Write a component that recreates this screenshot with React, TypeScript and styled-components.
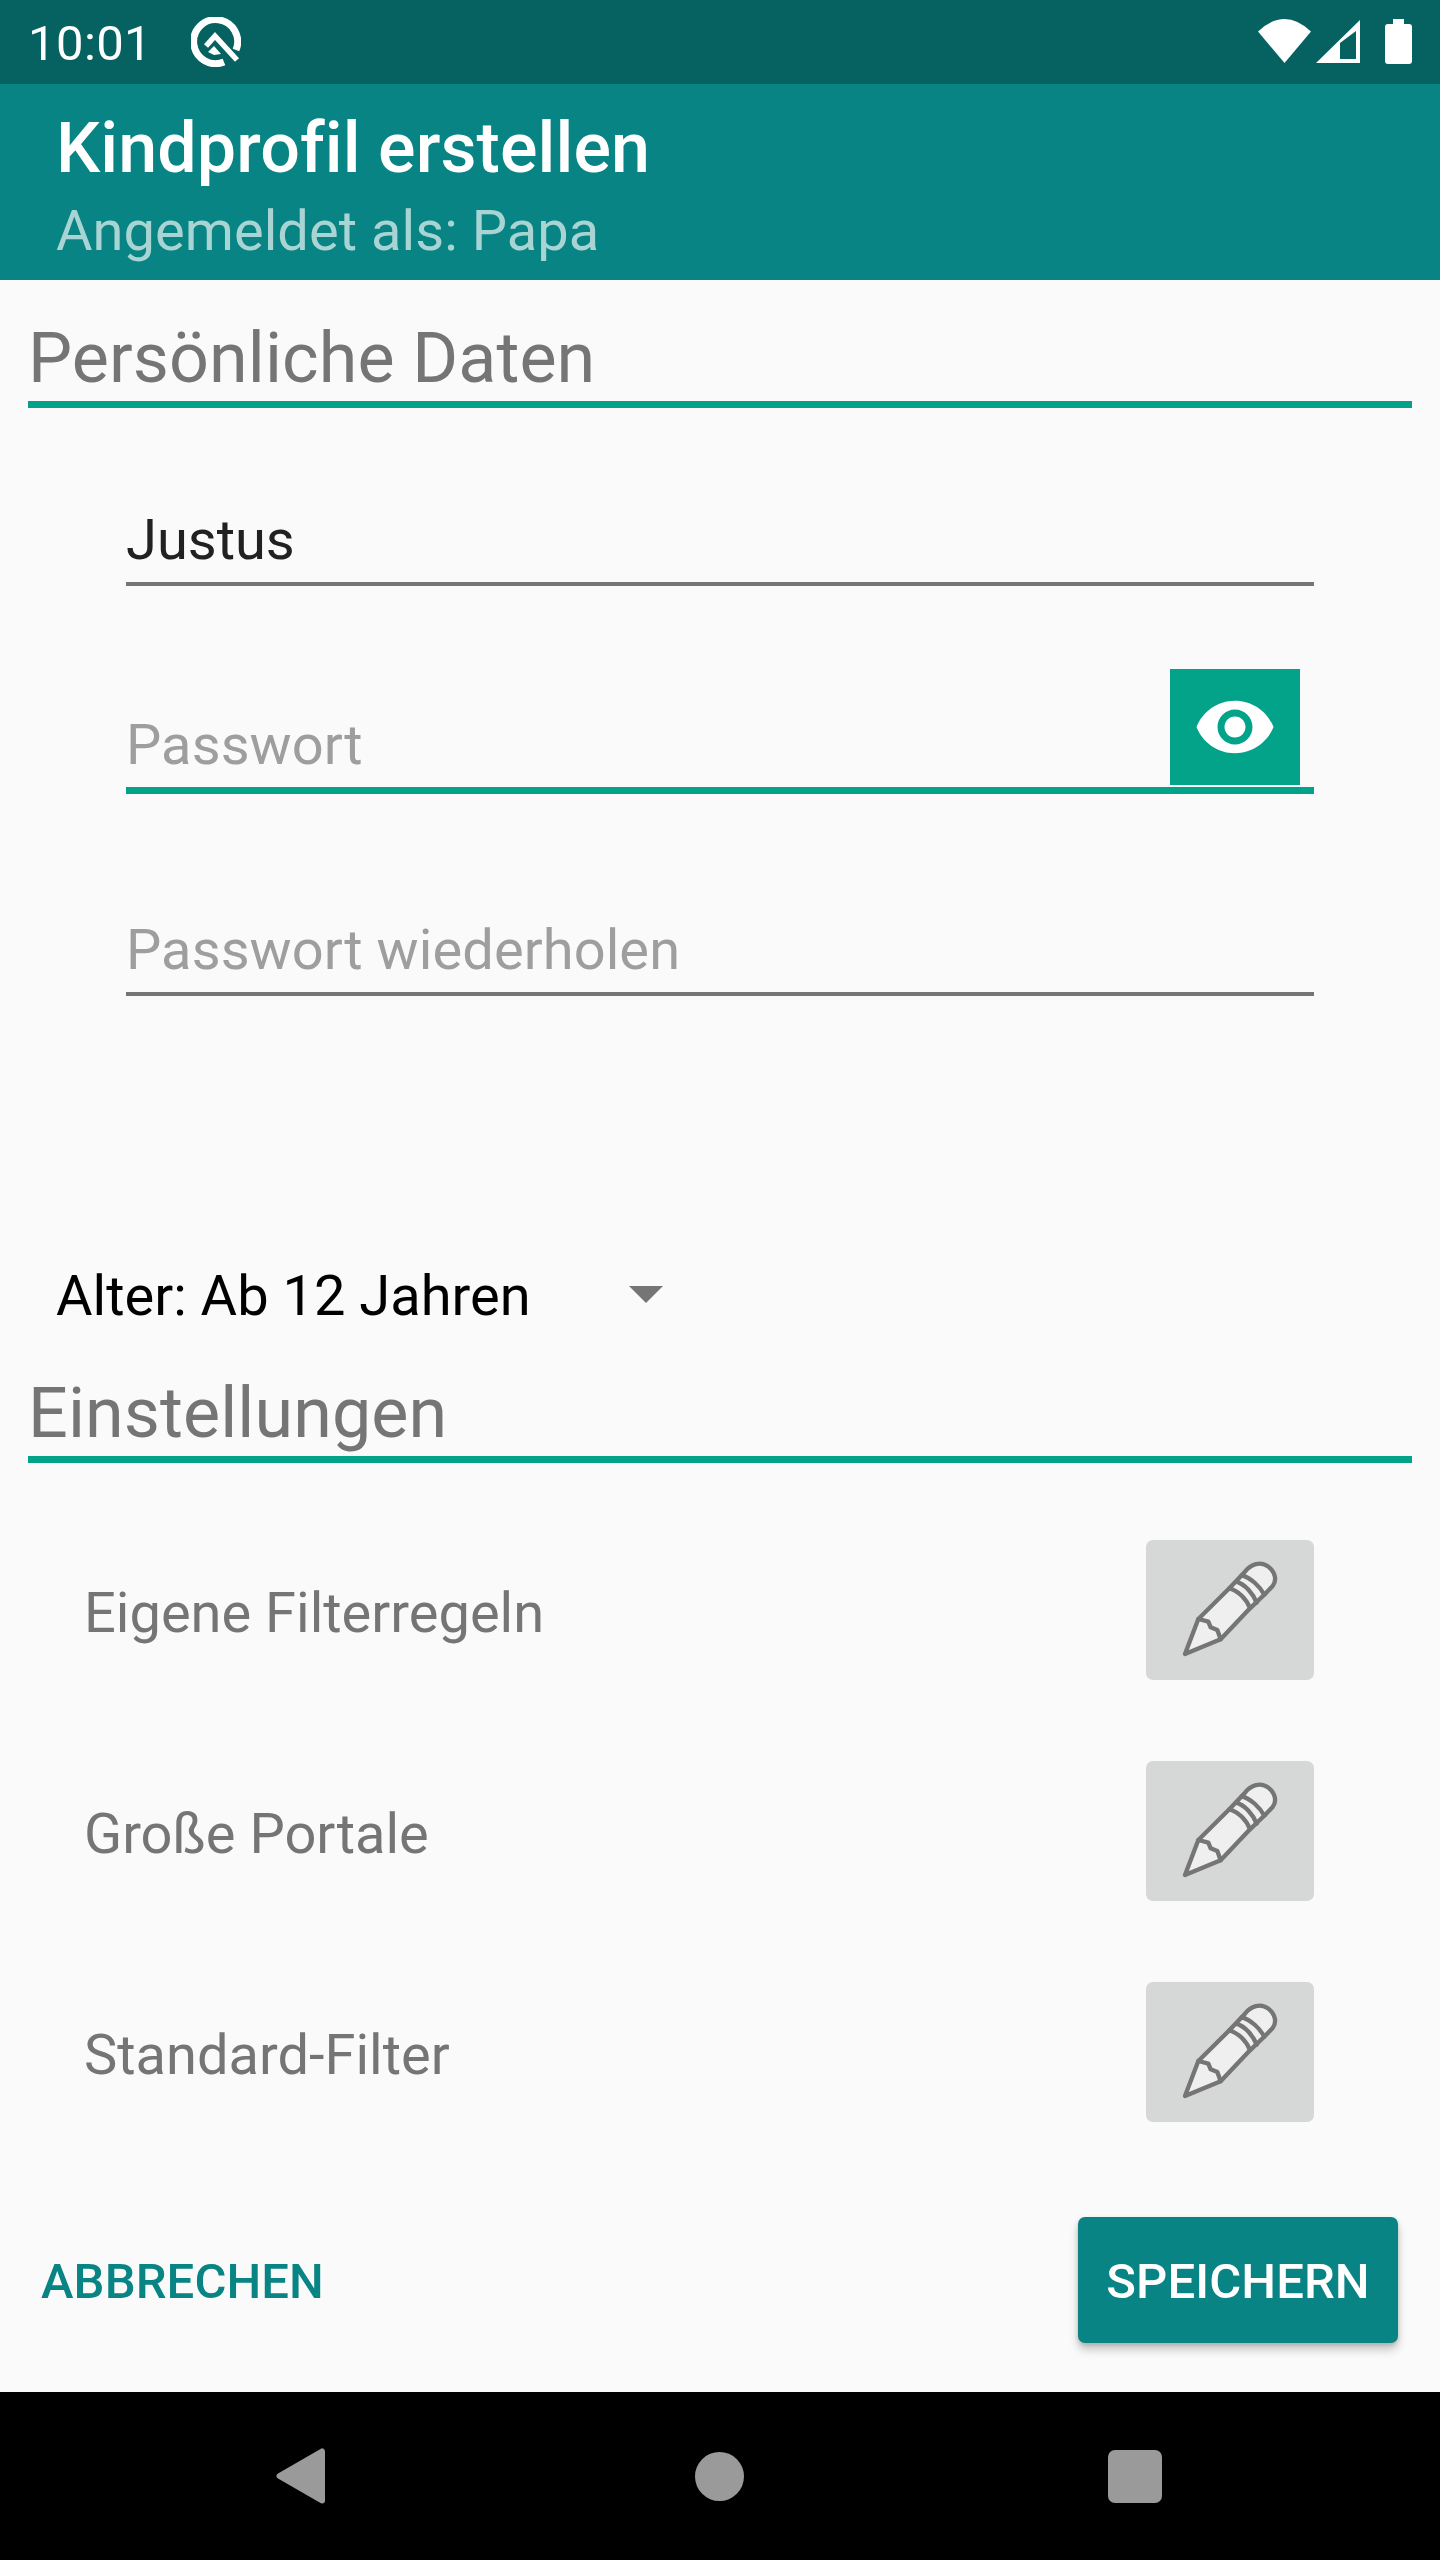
import React from 'react';
import styled, { createGlobalStyle } from 'styled-components';

const GlobalStyle = createGlobalStyle`
  html, body {
    margin: 0;
    padding: 0;
    background: #fafafa;
  }
  * {
    box-sizing: border-box;
  }
`;

const Screen = styled.div`
  width: 1440px;
  height: 2560px;
  display: flex;
  flex-direction: column;
  font-family: Roboto, "Liberation Sans", sans-serif;
  background: #fafafa;
  overflow: hidden;
`;

// Status bar
const StatusBar = styled.div`
  height: 84px;
  flex: none;
  display: flex;
  align-items: center;
  padding: 0 28px;
  background: #056261;
  color: #fff;
`;

const Clock = styled.span`
  width: 163px;
  padding-top: 4px;
  font-size: 49px;
  line-height: 60px;
  letter-spacing: 0.4px;
`;

const StatusIcons = styled.div`
  margin-left: auto;
  display: flex;
  align-items: center;
`;

const StatusIcon = styled.svg<{ $gap?: number }>`
  display: block;
  margin-left: ${(p) => p.$gap ?? 0}px;
  fill: #fff;
`;

// Toolbar
const Toolbar = styled.header`
  height: 196px;
  flex: none;
  padding: 22px 56px 0;
  background: #078483;
`;

const Title = styled.h1`
  margin: 0 0 8px;
  font-size: 70px;
  line-height: 84px;
  font-weight: 500;
  letter-spacing: 0.08px;
  color: #fff;
`;

const Subtitle = styled.div`
  font-size: 56px;
  line-height: 66px;
  letter-spacing: 0.05px;
  color: #a8d5d4;
`;

// Form
const Content = styled.main`
  flex: 1;
  display: flex;
  flex-direction: column;
  padding-top: 36px;
`;

const SectionTitle = styled.h2`
  margin: 0 28px;
  padding-bottom: 1px;
  border-bottom: 7px solid #03a38a;
  font-size: 70px;
  line-height: 84px;
  font-weight: 400;
  letter-spacing: 0.1px;
  color: #757575;
`;

const Fields = styled.div`
  margin: 99px 126px 0;
`;

const Field = styled.div`
  height: 205px;
`;

const InputBox = styled.div<{ $focused?: boolean }>`
  position: relative;
  padding-bottom: 9px;
  border-bottom: ${(p) => (p.$focused ? '7px solid #03a38a' : '4px solid #757575')};
  font-size: 56px;
  line-height: 66px;
`;

const Value = styled.span`
  color: #212121;
`;

const Placeholder = styled.span`
  letter-spacing: 0.08px;
  color: #9e9e9e;
`;

const EyeButton = styled.button`
  position: absolute;
  right: 14px;
  bottom: 2px;
  width: 130px;
  height: 116px;
  display: flex;
  align-items: center;
  justify-content: center;
  padding: 0;
  border: none;
  background: #03a38a;
`;

const Spinner = styled.div`
  margin: 141px 0 42px 56px;
  display: flex;
  align-items: center;
  font-size: 56px;
  line-height: 66px;
  color: #000;
`;

const SpinnerLabel = styled.span`
  width: 573px;
`;

const SpinnerArrow = styled.span`
  width: 0;
  height: 0;
  margin-top: -4px;
  border-left: 17.5px solid transparent;
  border-right: 17.5px solid transparent;
  border-top: 17.5px solid #757575;
`;

const FilterList = styled.div`
  margin: 77px 126px 0 84px;
  display: flex;
  flex-direction: column;
  gap: 81px;
`;

const FilterRow = styled.div`
  height: 140px;
  display: flex;
  align-items: center;
  justify-content: space-between;
`;

const FilterLabel = styled.span`
  padding-top: 6px;
  font-size: 56px;
  line-height: 66px;
  color: #757575;
`;

const EditButton = styled.button`
  width: 168px;
  height: 140px;
  padding: 0;
  border: none;
  border-radius: 7px;
  background: #d6d7d7;
`;

const Footer = styled.div`
  margin-top: auto;
  padding: 0 42px 49px 41px;
  display: flex;
  align-items: center;
  justify-content: space-between;
`;

const TextButton = styled.button`
  padding: 4px 0 0;
  border: none;
  background: none;
  font-family: inherit;
  font-size: 49px;
  line-height: 60px;
  font-weight: 500;
  letter-spacing: 0.1px;
  color: #078483;
`;

const SaveButton = styled.button`
  width: 320px;
  height: 126px;
  padding: 3px 0 0;
  border: none;
  border-radius: 7px;
  background: #078483;
  box-shadow: 0 7px 10px rgba(0, 0, 0, 0.2), 0 2px 4px rgba(0, 0, 0, 0.15);
  font-family: inherit;
  font-size: 49px;
  line-height: 60px;
  font-weight: 500;
  letter-spacing: 0.1px;
  color: #fff;
`;

// Navigation bar
const NavBar = styled.nav`
  height: 168px;
  flex: none;
  display: flex;
  align-items: center;
  padding-left: 276px;
  background: #000;
`;

const NavCircle = styled.span`
  width: 49px;
  height: 49px;
  margin-left: 370px;
  border-radius: 50%;
  background: #9a9a9a;
`;

const NavSquare = styled.span`
  width: 54px;
  height: 53px;
  margin-left: 364px;
  border-radius: 7px;
  background: #9a9a9a;
`;

const Pencil = () => (
  <svg width="168" height="140" viewBox="48 60 504 420" fill="none" stroke="#757575" strokeWidth="13" strokeLinejoin="round" strokeLinecap="round">
    <path
      fill="#efefef"
      d="M165 402 L205 297 L298 205 L345 155 C362 133 392 122 415 140 C438 158 440 182 428 198 L405 222 L360 265 L272 358 Z"
    />
    <path d="M205 297 L235 305 L242 322 L262 330 L272 358" />
    <path d="M298 205 C325 212 350 238 360 265" />
    <path d="M318 185 C345 192 370 222 380 248" />
    <path d="M335 166 C362 172 390 200 403 224" />
  </svg>
);

const filters = ['Eigene Filterregeln', 'Große Portale', 'Standard-Filter'];

const App: React.FC = () => {
  return (
    <Screen>
      <GlobalStyle />
      <StatusBar>
        <Clock>10:01</Clock>
        <svg width="50" height="50" viewBox="0 0 50 50" fill="none" stroke="#fff">
          <path strokeWidth="7" d="M45 33 A22 22 0 1 0 33 45" />
          <path strokeWidth="5.5" d="M15 29 L24 19 L46 43" />
          <path fill="#fff" stroke="none" d="M17 35 L23 29 L30 37 L23 38 Z" />
        </svg>
        <StatusIcons>
          <StatusIcon width="53" height="84" viewBox="0 0 53 84">
            <path d="M0 31.5 Q26.5 6.5 53 31.5 L26.5 63 Z" />
          </StatusIcon>
          <StatusIcon $gap={5} width="44" height="84" viewBox="0 0 44 84">
            <path fillRule="evenodd" d="M0 63 L44 20 L44 63 Z M24 59 L40 59 L40 31 L24 43 Z" />
          </StatusIcon>
          <StatusIcon $gap={25} width="27" height="84" viewBox="0 0 27 84">
            <path d="M8 19 H19 V24 H24 A3 3 0 0 1 27 27 V61 A3 3 0 0 1 24 64 H3 A3 3 0 0 1 0 61 V27 A3 3 0 0 1 3 24 H8 Z" />
          </StatusIcon>
        </StatusIcons>
      </StatusBar>

      <Toolbar>
        <Title>Kindprofil erstellen</Title>
        <Subtitle>Angemeldet als: Papa</Subtitle>
      </Toolbar>

      <Content>
        <SectionTitle>Persönliche Daten</SectionTitle>
        <Fields>
          <Field>
            <InputBox>
              <Value>Justus</Value>
            </InputBox>
          </Field>
          <Field>
            <InputBox $focused>
              <Placeholder>Passwort</Placeholder>
              <EyeButton>
                <svg width="84" height="84" viewBox="0 0 24 24" fill="#fff">
                  <path d="M12 4.5C7 4.5 2.73 7.61 1 12c1.73 4.39 6 7.5 11 7.5s9.27-3.11 11-7.5c-1.73-4.39-6-7.5-11-7.5zM12 17c-2.76 0-5-2.24-5-5s2.24-5 5-5 5 2.24 5 5-2.24 5-5 5zm0-8c-1.66 0-3 1.34-3 3s1.34 3 3 3 3-1.34 3-3-1.34-3-3-3z" />
                </svg>
              </EyeButton>
            </InputBox>
          </Field>
          <Field>
            <InputBox>
              <Placeholder>Passwort wiederholen</Placeholder>
            </InputBox>
          </Field>
        </Fields>

        <Spinner>
          <SpinnerLabel>Alter: Ab 12 Jahren</SpinnerLabel>
          <SpinnerArrow />
        </Spinner>

        <SectionTitle>Einstellungen</SectionTitle>
        <FilterList>
          {filters.map((name) => (
            <FilterRow key={name}>
              <FilterLabel>{name}</FilterLabel>
              <EditButton>
                <Pencil />
              </EditButton>
            </FilterRow>
          ))}
        </FilterList>

        <Footer>
          <TextButton>ABBRECHEN</TextButton>
          <SaveButton>SPEICHERN</SaveButton>
        </Footer>
      </Content>

      <NavBar>
        <svg width="49" height="56" viewBox="0 0 49 56" fill="#9a9a9a" stroke="#9a9a9a" strokeWidth="6" strokeLinejoin="round">
          <path d="M3.5 28 L46 3.5 L46 52.5 Z" />
        </svg>
        <NavCircle />
        <NavSquare />
      </NavBar>
    </Screen>
  );
};

export default App;
